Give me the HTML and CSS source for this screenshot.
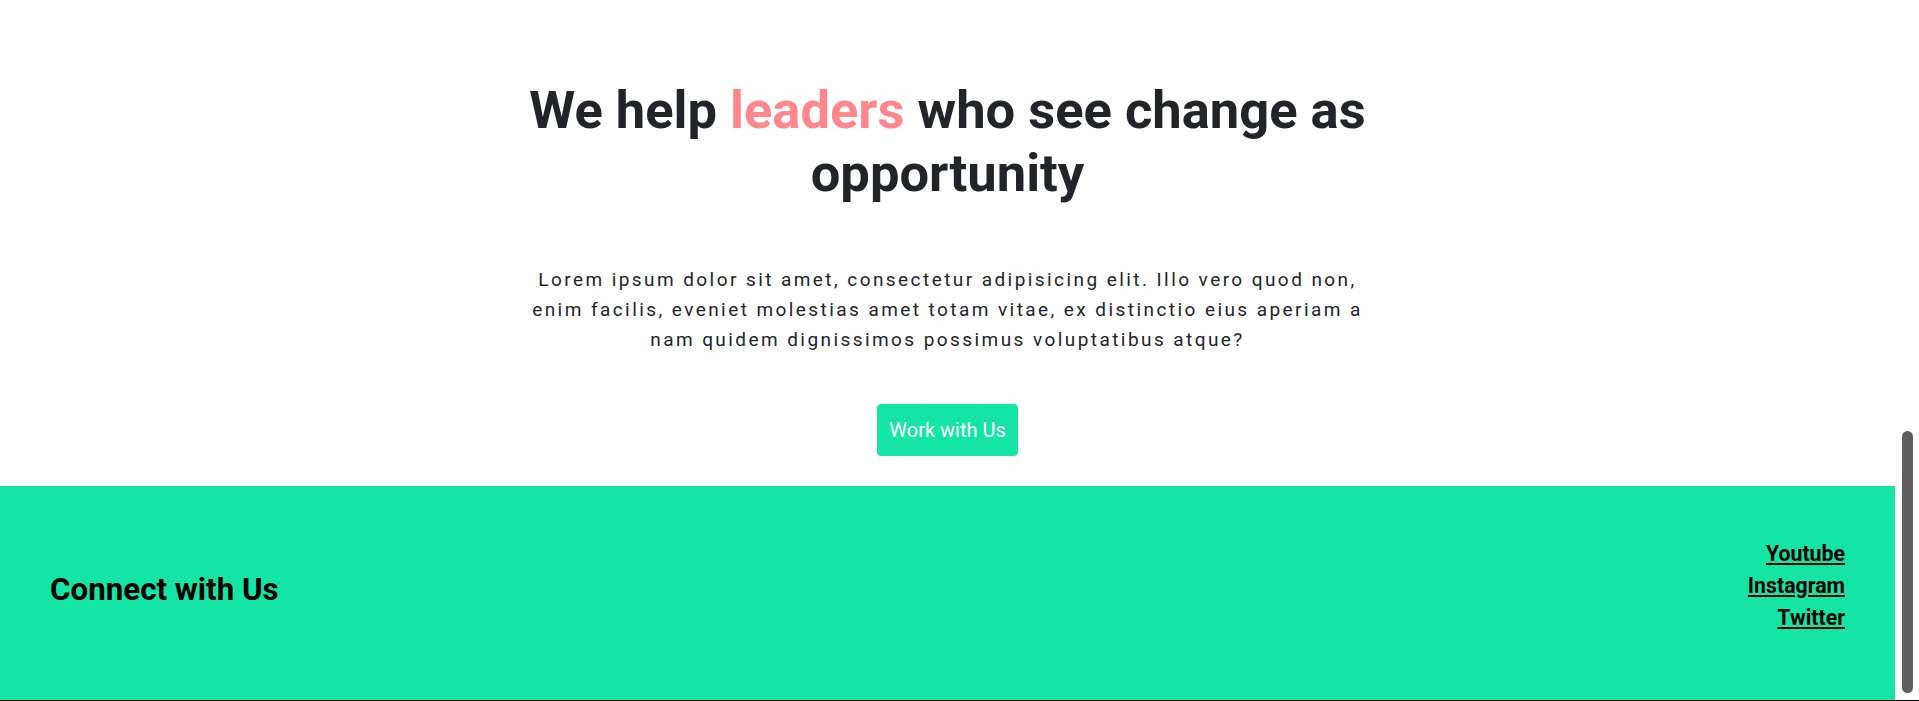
FILE: index.html
```html
<!DOCTYPE html>
<html lang="en">
<head>
<meta charset="utf-8">
<title>We help leaders</title>
<link rel="stylesheet" href="styles.css">
</head>
<body>
<div class="app">
  <div class="page">
    <section class="hero">
      <h1 class="hero-title">We help <span class="accent">leaders</span> who see change as opportunity</h1>
      <p class="hero-text">Lorem ipsum dolor sit amet, consectetur adipisicing elit. Illo vero quod non, enim facilis, eveniet molestias amet totam vitae, ex distinctio eius aperiam a nam quidem dignissimos possimus voluptatibus atque?</p>
      <a class="btn" href="#">Work with Us</a>
    </section>
    <footer class="footer">
      <h3 class="footer-title">Connect with Us</h3>
      <div class="footer-links">
        <a class="footer-link" href="#">Youtube</a>
        <a class="footer-link" href="#">Instagram</a>
        <a class="footer-link" href="#">Twitter</a>
      </div>
    </footer>
  </div>
  <div class="scrollbar"><div class="thumb"></div></div>
</div>
</body>
</html>
```

FILE: styles.css
```css
* { box-sizing: border-box; }
html, body { margin: 0; padding: 0; }
body {
  font-family: Roboto, "Liberation Sans", Arial, sans-serif;
  color: #212529;
  background: #fff;
  overflow: hidden;
}
.app {
  display: flex;
  height: 701px;
  border-bottom: 1px solid #000;
}
.page {
  flex: 1;
  display: flex;
  flex-direction: column;
}
.hero {
  flex: 1;
  display: flex;
  flex-direction: column;
  align-items: center;
  padding-top: 79px;
}
.hero-title {
  margin: 0;
  width: 850px;
  text-align: center;
  font-size: 52.5px;
  line-height: 63px;
  font-weight: 700;
  color: #212529;
}
.accent { color: #ff878c; }
.hero-text {
  margin: 60px 0 0;
  width: 850px;
  text-align: center;
  font-size: 19px;
  line-height: 30px;
  letter-spacing: 2.43px;
  color: #212529;
}
.btn {
  margin-top: 49px;
  display: inline-block;
  padding: 10px 11px;
  border: 1px solid #14e5a5;
  border-radius: 4px;
  background: #14e5a5;
  color: #fff;
  font-size: 20px;
  line-height: 30px;
  text-decoration: none;
}
.footer {
  height: 214px;
  flex: none;
  background: #14e5a5;
  display: flex;
  justify-content: space-between;
  align-items: center;
  padding: 0 50px;
}
.footer-title {
  margin: 0 0 8px;
  font-size: 31.3px;
  line-height: 37px;
  font-weight: 700;
  color: #000;
}
.footer-links {
  display: flex;
  flex-direction: column;
  align-items: flex-end;
  margin-bottom: 9px;
}
.footer-link {
  font-size: 21.3px;
  line-height: 25px;
  font-weight: 700;
  color: #000;
  text-decoration: underline;
  margin-bottom: 7px;
}
.scrollbar {
  width: 24px;
  flex: none;
  background: #fff;
  padding-top: 431px;
}
.thumb {
  margin-left: 7px;
  width: 11px;
  height: 262px;
  border-radius: 6px;
  background: #5f5f5f;
}
```
